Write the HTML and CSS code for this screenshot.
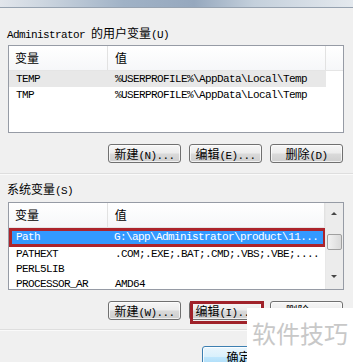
FILE: index.html
```html
<!DOCTYPE html>
<html lang="zh-CN">
<head>
    <meta charset="UTF-8">
    <title>环境变量</title>
    <link rel="stylesheet" href="styles.css">
</head>
<body>

    <div class="titlebar"></div>

    <div class="group-label">Administrator <span class="zh">的用户变量</span>(U)</div>
    <div class="list">
        <div class="list-body">
            <div class="list-head">
                <div class="col-name"><span class="zh">变量</span></div>
                <div class="col-value"><span class="zh">值</span></div>
                <div class="col-rest"></div>
            </div>
            <div class="row soft">
                <div class="col-name">TEMP</div>
                <div class="col-value">%USERPROFILE%\AppData\Local\Temp</div>
            </div>
            <div class="row">
                <div class="col-name">TMP</div>
                <div class="col-value">%USERPROFILE%\AppData\Local\Temp</div>
            </div>
        </div>
    </div>
    <div class="buttons">
        <div class="btn"><span class="zh">新建</span>(N)...</div>
        <div class="btn"><span class="zh">编辑</span>(E)...</div>
        <div class="btn"><span class="zh">删除</span>(D)</div>
    </div>

    <div class="separator"></div>

    <div class="group-label sys"><span class="zh">系统变量</span>(S)</div>
    <div class="list">
        <div class="list-body">
            <div class="list-head">
                <div class="col-name"><span class="zh">变量</span></div>
                <div class="col-value"><span class="zh">值</span></div>
            </div>
            <div class="row marked">
                <div class="col-name">Path</div>
                <div class="col-value">G:\app\Administrator\product\11...</div>
            </div>
            <div class="row tight">
                <div class="col-name">PATHEXT</div>
                <div class="col-value">.COM;.EXE;.BAT;.CMD;.VBS;.VBE;....</div>
            </div>
            <div class="row tight">
                <div class="col-name">PERL5LIB</div>
                <div class="col-value"></div>
            </div>
            <div class="row tight">
                <div class="col-name">PROCESSOR_AR</div>
                <div class="col-value">AMD64</div>
            </div>
        </div>
        <div class="vscroll">
            <div class="arrow up"></div>
            <div class="track">
                <div class="thumb"></div>
            </div>
            <div class="arrow down"></div>
        </div>
    </div>
    <div class="buttons second">
        <div class="btn"><span class="zh">新建</span>(W)...</div>
        <div class="btn"><span class="zh">编辑</span>(I)...<span class="mark-box"></span></div>
        <div class="btn"><span class="zh">删除</span>(L)</div>
    </div>

    <div class="separator low"></div>

    <div class="buttons footer">
        <div class="btn default"><span class="zh">确定</span></div>
        <div class="btn cancel"></div>
    </div>

    <div class="watermark">软件技巧</div>

</body>
</html>
```

FILE: styles.css
```css
body {
    margin: 0;
    width: 353px;
    height: 362px;
    overflow: hidden;
    position: relative;
    background-color: rgb(240, 240, 240);
    font-family: 'Liberation Mono', 'Noto Sans CJK SC', monospace;
    font-size: 11px;
    letter-spacing: -0.6px;
    color: rgb(0, 0, 0);
}

.zh {
    font-family: 'Noto Sans CJK SC', sans-serif;
    font-size: 12px;
    letter-spacing: 0;
}

/* blurred strip of the window above */
.titlebar {
    height: 7px;
    border-bottom: 1px solid rgb(150, 162, 176);
    background: linear-gradient(to right, rgb(226, 230, 236), rgb(205, 214, 224) 12%, rgb(160, 178, 198) 35%, rgb(150, 168, 190) 55%, rgb(196, 208, 220) 72%, rgb(228, 233, 238));
}

.group-label {
    margin: 18px 0 0 7px;
    height: 14px;
    line-height: 14px;
    white-space: nowrap;
}

.group-label.sys {
    margin-top: 7px;
}

.list {
    display: flex;
    box-sizing: border-box;
    width: 336px;
    height: 88px;
    margin: 5px 0 0 8px;
    border: 1px solid rgb(150, 155, 165);
    background-color: rgb(255, 255, 255);
    overflow: hidden;
}

.group-label.sys + .list {
    margin-top: 6px;
}

.list-body {
    flex: 1;
    min-width: 0;
}

.list-head {
    display: flex;
    height: 24px;
    line-height: 24px;
    border-bottom: 1px solid rgb(229, 229, 229);
    background: linear-gradient(to bottom, rgb(255, 255, 255), rgb(246, 247, 249));
}

.list-head .col-name,
.list-head .col-value {
    border-right: 1px solid rgb(226, 226, 226);
}

.col-name {
    box-sizing: border-box;
    width: 99px;
    padding-left: 7px;
    white-space: nowrap;
    overflow: hidden;
}

.col-value {
    box-sizing: border-box;
    width: 218px;
    padding-left: 7px;
    white-space: nowrap;
    overflow: hidden;
}

.list-head .col-name {
    padding-left: 6px;
}

.col-rest {
    flex: 1;
}

.row {
    display: flex;
    width: 317px;
    height: 16px;
    line-height: 16px;
}

.row.tight {
    height: 15px;
    line-height: 15px;
}

.row.soft {
    background-color: rgb(232, 232, 232);
}

.row.marked {
    box-sizing: border-box;
    height: 19px;
    line-height: 13px;
    border: 3px solid rgb(172, 36, 44);
    background-color: rgb(51, 153, 255);
    color: rgb(255, 255, 255);
}

.row.marked .col-name {
    width: 96px;
    padding-left: 4px;
}

.vscroll {
    width: 17px;
    display: flex;
    flex-direction: column;
    background-color: rgb(236, 236, 236);
    border-left: 1px solid rgb(232, 232, 232);
}

.arrow {
    height: 20px;
    position: relative;
}

.arrow::after {
    content: '';
    position: absolute;
    left: 5px;
    top: 9px;
    border-left: 3px solid transparent;
    border-right: 3px solid transparent;
}

.arrow.up::after {
    border-bottom: 3px solid rgb(70, 70, 70);
}

.arrow.down::after {
    top: 6px;
    border-top: 3px solid rgb(70, 70, 70);
}

.track {
    flex: 1;
    padding-top: 11px;
}

.thumb {
    height: 14px;
    margin: 0 1px;
    border: 1px solid rgb(160, 160, 160);
    border-radius: 2px;
    background: linear-gradient(to right, rgb(242, 242, 242), rgb(218, 218, 218));
}

.buttons {
    display: flex;
    justify-content: flex-end;
    gap: 8px;
    padding-right: 10px;
    margin-top: 11px;
}

.btn {
    position: relative;
    box-sizing: border-box;
    width: 73px;
    height: 19px;
    line-height: 17px;
    text-align: center;
    white-space: nowrap;
    border: 1px solid rgb(112, 112, 112);
    border-radius: 3px;
    background: linear-gradient(to bottom, rgb(246, 246, 246) 0%, rgb(236, 236, 236) 48%, rgb(218, 218, 218) 52%, rgb(206, 206, 206) 100%);
    box-shadow: inset 0 0 0 1px rgba(255, 255, 255, 0.7);
}

.mark-box {
    position: absolute;
    left: 0;
    top: -1px;
    right: -3px;
    bottom: -5px;
    border: 3px solid rgb(160, 34, 42);
}

.separator {
    height: 1px;
    margin-top: 10px;
    background-color: rgb(222, 222, 222);
    border-bottom: 1px solid rgb(250, 250, 250);
}

.separator.low {
    margin-top: 9px;
}

.buttons.footer {
    margin-top: 15px;
}

.btn.default {
    height: 22px;
    line-height: 20px;
    border-color: rgb(60, 127, 177);
    background: linear-gradient(to bottom, rgb(234, 246, 253) 0%, rgb(217, 240, 252) 48%, rgb(190, 230, 253) 52%, rgb(167, 217, 245) 100%);
    box-shadow: inset 0 0 0 1px rgba(255, 255, 255, 0.8);
}

.btn.cancel {
    width: 60px;
}

.watermark {
    position: absolute;
    left: 247px;
    top: 308px;
    right: 0;
    bottom: 0;
    padding: 11px 0 0 5px;
    background-color: rgb(255, 255, 255);
    color: rgb(200, 200, 200);
    font-family: 'Noto Sans CJK SC', sans-serif;
    font-size: 24px;
    line-height: 28px;
    letter-spacing: 0;
}
```
